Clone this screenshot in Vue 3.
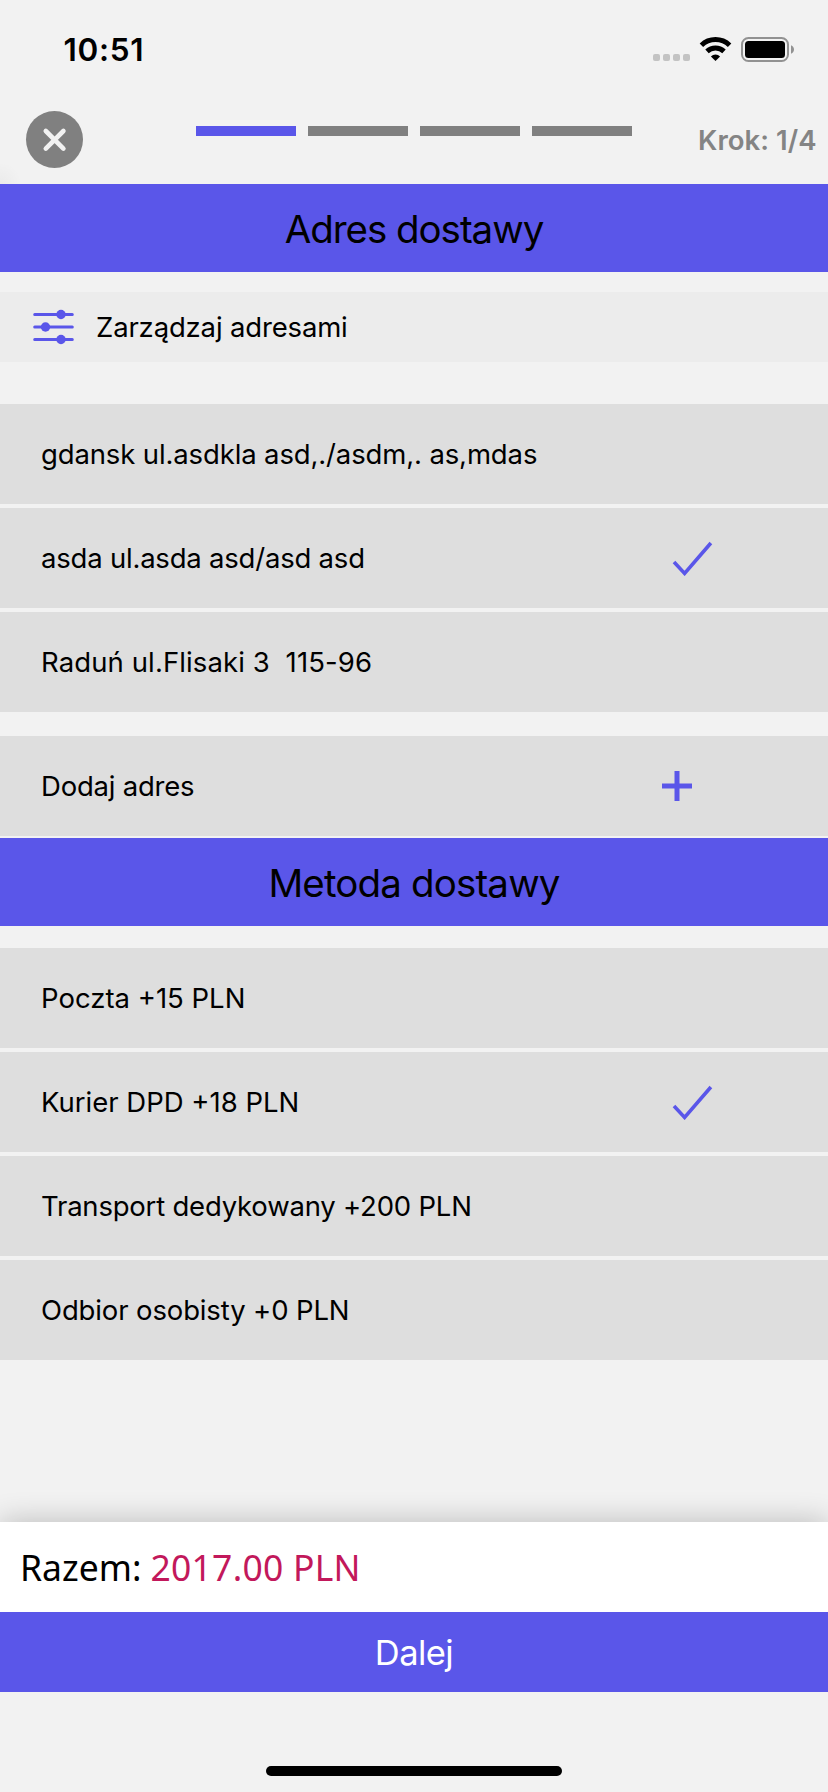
<script setup>
import { ref } from 'vue'

const steps = [1, 2, 3, 4]
const currentStep = ref(1)

const addresses = [
  { label: 'gdansk ul.asdkla asd,./asdm,. as,mdas', cls: 'snug' },
  { label: 'asda ul.asda asd/asd asd', cls: 'tight' },
  { label: 'Raduń ul.Flisaki 3\u00a0 115-96', cls: 'loose' },
]
const methods = [
  { label: 'Poczta +15 PLN', cls: '' },
  { label: 'Kurier DPD +18 PLN', cls: '' },
  { label: 'Transport dedykowany +200 PLN', cls: 'tight' },
  { label: 'Odbior osobisty +0 PLN', cls: 'snug' },
]
const selectedAddress = ref(1)
const selectedMethod = ref(1)
</script>

<template>
  <div class="screen">
    <div class="status">
      <span class="time">10:51</span>
      <svg class="indicators" width="142" height="26" viewBox="0 0 142 26">
        <g fill="#c3c3c3">
          <rect x="0" y="18" width="7" height="7" rx="2" />
          <rect x="10" y="18" width="7" height="7" rx="2" />
          <rect x="20" y="18" width="7" height="7" rx="2" />
          <rect x="30" y="18" width="7" height="7" rx="2" />
        </g>
        <g fill="none" stroke="#000" stroke-width="5">
          <path d="M48.4 9.2a20.4 20.4 0 0 1 28.2 0" />
          <path d="M54 15.4a12.4 12.4 0 0 1 17 0" />
        </g>
        <path d="M62.5 25l-4.6-4.6a6.6 6.6 0 0 1 9.2 0z" />
        <rect x="89" y="2" width="46" height="23" rx="6.5" fill="none" stroke="#929292" stroke-width="2" />
        <rect x="92" y="5" width="40" height="17" rx="3.5" />
        <path d="M138 9.3c4 1.4 4 7 0 8.4z" fill="#929292" />
      </svg>
    </div>

    <header class="topbar">
      <button class="close" aria-label="Zamknij">
        <svg width="57" height="57" viewBox="0 0 57 57">
          <path d="M19.8 20L37.4 37.6M37.4 20L19.8 37.6" stroke="#f2f2f2" stroke-width="4.6" stroke-linecap="round" />
        </svg>
      </button>
      <div class="progress">
        <i v-for="s in steps" :key="s" :class="{ active: s <= currentStep }"></i>
      </div>
      <span class="step">Krok: {{ currentStep }}/4</span>
    </header>

    <h2 class="banner">Adres dostawy</h2>

    <div class="manage">
      <svg width="42" height="36" viewBox="0 0 42 36">
        <g stroke="#5a56e9" stroke-width="3" stroke-linecap="round">
          <path d="M1.7 5.5H39.3M1.7 18H39.3M1.7 30.5H39.3" />
        </g>
        <g fill="#5a56e9">
          <circle cx="28" cy="5.5" r="4.7" />
          <circle cx="12.5" cy="18" r="4.7" />
          <circle cx="28" cy="30.5" r="4.7" />
        </g>
      </svg>
      <span class="manage-label">Zarządzaj adresami</span>
    </div>

    <div class="list">
      <div v-for="(a, i) in addresses" :key="i" class="row">
        <span :class="a.cls">{{ a.label }}</span>
        <svg v-if="i === selectedAddress" class="check" width="42" height="36" viewBox="0 0 42 36">
          <path d="M2 22L12.6 33.4L38.9 3" fill="none" stroke="#5a56e9" stroke-width="3.6" />
        </svg>
      </div>
    </div>

    <div class="row add">
      <span class="tight">Dodaj adres</span>
      <svg class="plus" width="30" height="30" viewBox="0 0 30 30">
        <path d="M15 0V30M0 15H30" stroke="#5a56e9" stroke-width="5" />
      </svg>
    </div>

    <h2 class="banner second">Metoda dostawy</h2>

    <div class="list methods">
      <div v-for="(m, i) in methods" :key="i" class="row">
        <span :class="m.cls">{{ m.label }}</span>
        <svg v-if="i === selectedMethod" class="check" width="42" height="36" viewBox="0 0 42 36">
          <path d="M2 22L12.6 33.4L38.9 3" fill="none" stroke="#5a56e9" stroke-width="3.6" />
        </svg>
      </div>
    </div>

    <footer>
      <div class="total"><span>Razem:</span><span class="sum">2017.00 PLN</span></div>
      <button class="next">Dalej</button>
    </footer>
    <div class="home"></div>
  </div>
</template>

<style>
body {
  background: #f2f2f2;
}
</style>

<style scoped>
.screen {
  box-sizing: border-box;
  width: 828px;
  height: 1792px;
  display: flex;
  flex-direction: column;
  overflow: hidden;
  background: #f2f2f2;
  color: #000;
  font-family: Inter, "Liberation Sans", sans-serif;
  font-size: 27.5px;
  white-space: nowrap;
}
button {
  border: 0;
  padding: 0;
  margin: 0;
  font-family: inherit;
}
svg {
  display: block;
  flex: none;
}
.snug {
  letter-spacing: -0.13px;
}
.tight {
  letter-spacing: -0.21px;
}
.loose {
  letter-spacing: 0.11px;
}
.status {
  height: 99px;
  display: flex;
  align-items: flex-start;
  justify-content: space-between;
  padding: 0 33px 0 63.5px;
}
.time {
  font-size: 31.5px;
  font-weight: 600;
  line-height: 40px;
  letter-spacing: 0.7px;
  margin-top: 30px;
}
.indicators {
  margin-top: 36px;
}
.topbar {
  height: 85px;
  display: flex;
  align-items: flex-start;
  background: radial-gradient(circle at 0 100%, rgba(0, 0, 0, 0.03), rgba(0, 0, 0, 0) 22px);
}
.close {
  width: 57px;
  height: 57px;
  margin: 12px 0 0 26px;
  border-radius: 50%;
  background: #808080;
}
.progress {
  display: flex;
  gap: 12px;
  margin: 27px 0 0 113px;
}
.progress i {
  width: 100px;
  height: 10px;
  background: #808080;
}
.progress i.active {
  background: #5a56e9;
}
.step {
  margin: 21px 0 0 66px;
  line-height: 40px;
  font-weight: 600;
  letter-spacing: 0.05px;
  color: #848484;
}
.banner {
  box-sizing: border-box;
  flex: none;
  height: 88px;
  margin: 0;
  padding-top: 1px;
  line-height: 88px;
  text-align: center;
  font-size: 38.5px;
  font-weight: 400;
  letter-spacing: -1.05px;
  background: #5a56e9;
}
.banner.second {
  letter-spacing: -0.85px;
}
.manage {
  flex: none;
  height: 70px;
  margin: 20px 0 42px;
  display: flex;
  align-items: center;
  padding-left: 33px;
  background: #ececec;
}
.manage-label {
  margin-left: 21px;
  letter-spacing: -0.16px;
}
.list {
  display: flex;
  flex-direction: column;
  gap: 4px;
}
.row {
  flex: none;
  height: 100px;
  display: flex;
  align-items: center;
  justify-content: space-between;
  padding-left: 41px;
  background: #dedede;
}
.check {
  margin-right: 114px;
}
.add {
  margin: 24px 0 2px;
}
.plus {
  margin-right: 136px;
}
.methods {
  margin-top: 22px;
}
footer {
  margin-top: 162px;
  flex: none;
}
.total {
  height: 90px;
  display: flex;
  align-items: center;
  padding-left: 20px;
  background: #fff;
  box-shadow: 0 0 30px rgba(0, 0, 0, 0.24);
  font-family: "Noto Sans", sans-serif;
  font-size: 35.5px;
}
.sum {
  margin-left: 9px;
  letter-spacing: 0.25px;
  color: #c2185b;
}
.next {
  display: block;
  position: relative;
  width: 100%;
  height: 80px;
  background: #5a56e9;
  color: #fff;
  font-size: 34.5px;
  letter-spacing: -0.55px;
}
.home {
  flex: none;
  width: 296px;
  height: 10px;
  margin: 74px auto 0;
  border-radius: 5px;
  background: #000;
}
</style>
